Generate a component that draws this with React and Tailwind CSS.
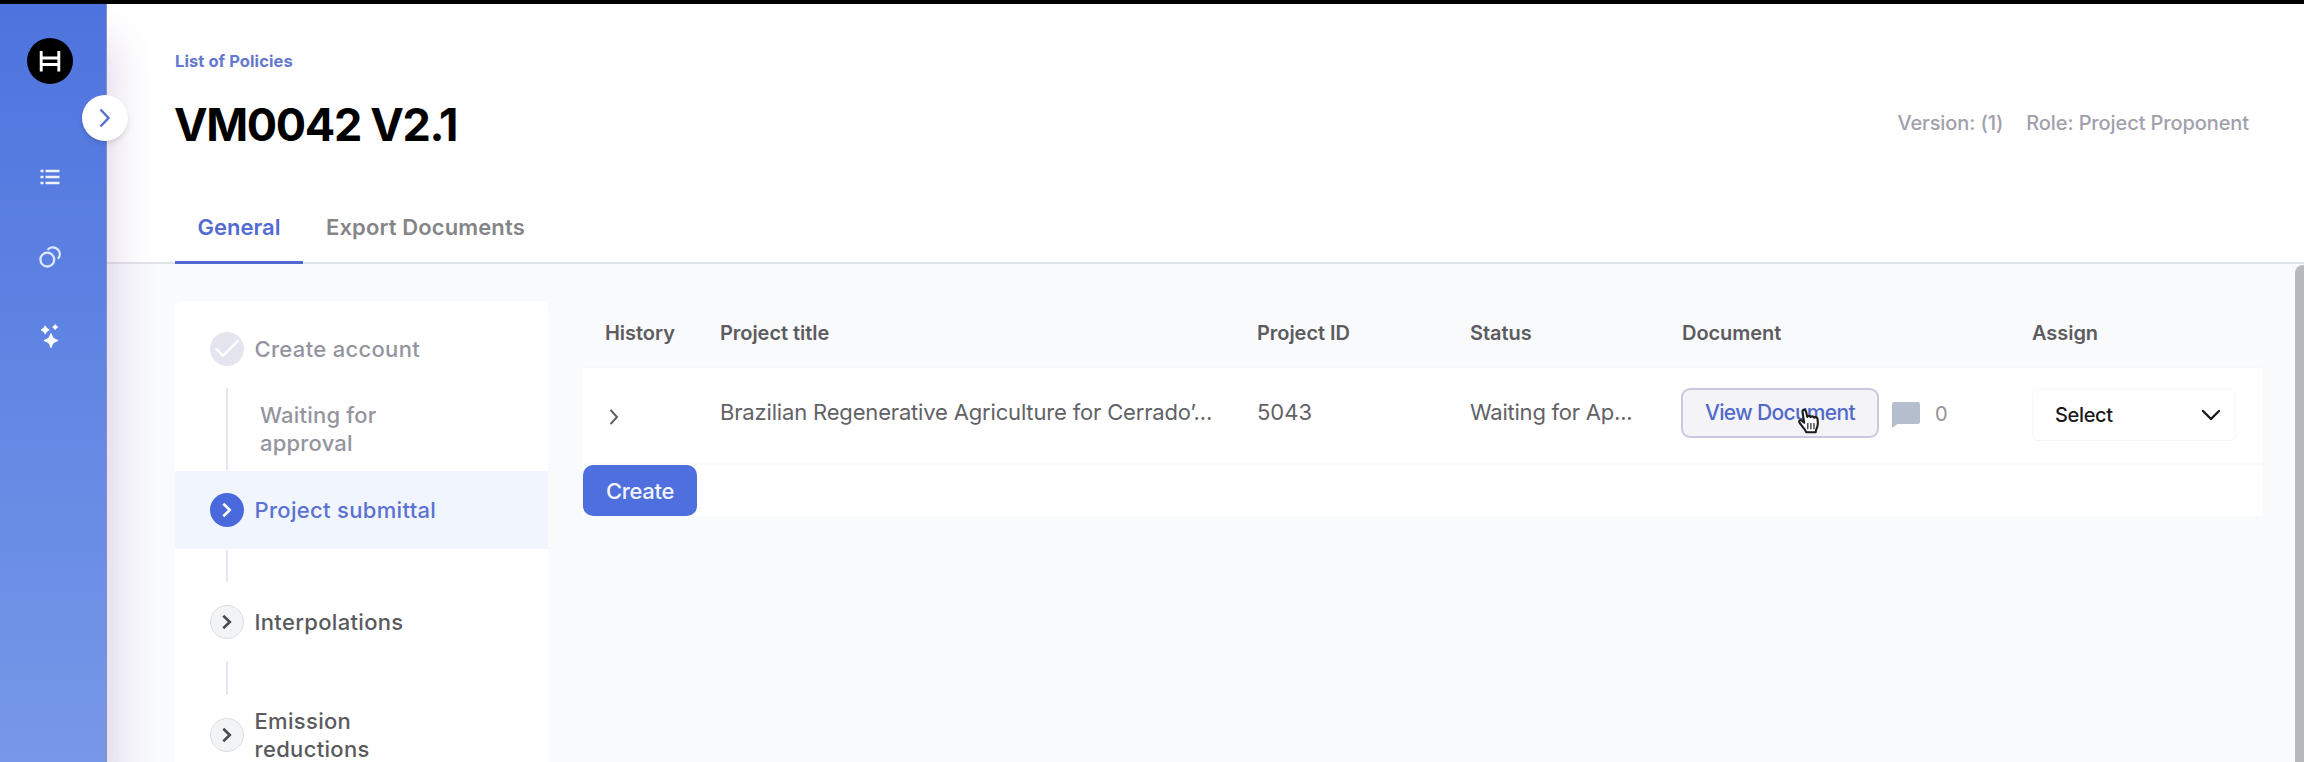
import React from 'react';
import { Check, ChevronDown } from 'lucide-react';
import { clsx } from 'clsx';

const steps = [
  { label: 'Create account', state: 'done' },
  { label: 'Project submittal', state: 'active' },
  { label: 'Interpolations', state: 'todo' },
  { label: 'Emission reductions', state: 'todo' },
];

const Logo = () => (
  <svg viewBox="0 0 46 46" className="w-[46px] h-[46px]">
    <circle cx="23" cy="23" r="23" fill="#000" />
    <path d="M14.2 13v20.5M31.8 13v20.5M14.2 20h17.6M14.2 26.500h17.600" fill="none" stroke="#fff" strokeWidth="2.900" />
  </svg>
);

const ListIcon = () => (
  <svg viewBox="0 0 20 16" className="w-5 h-4">
    <path d="M.5 2h3M.5 8h3M.5 14h3M5.5 2h14M5.5 8h14M5.5 14h14" fill="none" stroke="#eef2fd" strokeWidth="2.5" />
  </svg>
);

const TokensIcon = () => (
  <svg viewBox="0 0 22 22" className="w-[22px] h-[22px]" fill="none" stroke="#dfe7fb" strokeWidth="2.3">
    <circle cx="8.3" cy="13.6" r="6.9" />
    <path d="M8.600 3.800C10.500.900 15.500.300 18.500 3.200s2.900 6.800.4 9.600" />
  </svg>
);

const SparklesIcon = () => (
  <svg viewBox="0 0 18 24" className="w-[18px] h-6" fill="#fff" stroke="#fff" strokeWidth="1.7" strokeLinejoin="round">
    <path d="M10 10c1 4 2.100 5.300 6.300 6.500-4.200 1.200-5.300 2.500-6.300 6.500-1-4-2.100-5.300-6.300-6.500 4.200-1.200 5.300-2.500 6.300-6.500z" />
    <path d="M4.200 2.500c.6 2.200 1.200 2.800 3.300 3.400-2.100.6-2.700 1.200-3.300 3.400-.6-2.200-1.200-2.800-3.300-3.400 2.100-.6 2.700-1.200 3.300-3.400z" />
    <path d="M14.200 1.200c.4 1.200.7 1.500 1.900 1.900-1.200.4-1.500.7-1.900 1.900-.4-1.200-.7-1.500-1.900-1.900 1.200-.4 1.500-.7 1.900-1.900z" />
  </svg>
);

const HandCursor = () => (
  <svg viewBox="0 0 24 28" className="absolute left-[115px] top-[19px] w-6 h-7">
    <path
      d="M8.200 24.800c-.4-1.700-1.600-2.800-3.200-4.900C3.400 17.800 1.700 16 1.200 14.500c-.4-1.400 1.300-2.200 2.700-1.200l2.300 2L4.500 4.600c-.2-2.500 2.900-2.900 3.500-.5l1.300 5.500c.3-1.600 3-1.500 3.400.2.6-1.400 3.100-1.100 3.500.6.8-1.200 3-.7 3.300 1 .5 2.900.6 4.900-.1 7.600-.5 2-1.700 3.300-1.700 5.800z"
      transform="translate(1 .4)"
      fill="#fff"
      stroke="#1c1c1f"
      strokeWidth="2.1"
      strokeLinejoin="round"
    />
    <path d="M10.800 16v6.200M13.900 16v6.200M17 16v6.200" fill="none" stroke="#333" strokeWidth="1.300" />
  </svg>
);

const Sidebar = () => (
  <aside className="relative z-10 flex w-[107px] shrink-0 flex-col items-center border-r border-[#8a8fc0] bg-linear-to-b from-[#4e73de] to-[#7798e8] pr-[6px] pt-[34px] shadow-[4px_40px_40px_2px_rgba(130,80,170,0.24)]">
    <Logo />
    <button className="absolute left-[82px] top-[91px] flex h-[46px] w-[46px] items-center justify-center rounded-full bg-white shadow-md">
      <svg viewBox="0 0 12 20" className="h-5 w-3" fill="none" stroke="#5a72cf" strokeWidth="2.500">
        <path d="M1.500 1.500l8 8.500-8 8.500" />
      </svg>
    </button>
    <nav className="mt-[85px] flex flex-col items-center">
      <ListIcon />
      <div className="mt-[61px]"><TokensIcon /></div>
      <div className="mt-[56px]"><SparklesIcon /></div>
    </nav>
  </aside>
);

const StepBadge = ({ state }) => (
  <span
    className={clsx(
      'flex h-[34px] w-[34px] shrink-0 items-center justify-center rounded-full',
      state === 'done' && 'bg-[#e4e5ee] text-white',
      state === 'active' && 'bg-[#4a69dc] text-white',
      state === 'todo' && 'border border-[#dcdee2] bg-[#f3f4f5] text-[#4b4b4f]'
    )}
  >
    {state === 'done' ? (
      <Check className="h-8 w-8" strokeWidth={1.6} />
    ) : (
      <svg viewBox="0 0 10 16" className="h-4 w-[10px]" fill="none" stroke="currentColor" strokeWidth="2.6">
        <path d="M1.300 1.700l6.500 6.300-6.500 6.300" />
      </svg>
    )}
  </span>
);

const Step = ({ step, className }) => (
  <div className={clsx('flex items-center gap-[11px] pl-[34.5px]', className)}>
    <StepBadge state={step.state} />
    <span
      className={clsx(
        'w-[200px] text-[22px] font-medium leading-[28px] tracking-[0.32px]',
        step.state === 'done' && 'text-[#94949f]',
        step.state === 'active' && 'text-[#5b72d2]',
        step.state === 'todo' && 'text-[#5a5a5e]'
      )}
    >
      {step.label}
    </span>
  </div>
);

const StepsPanel = () => (
  <div className="flex h-[461px] w-[373px] shrink-0 flex-col overflow-hidden rounded-t-md bg-white">
    <Step step={steps[0]} className="mt-[18px] h-[60px] shrink-0" />
    <div className="ml-[51px] mt-[9px] flex h-[82px] shrink-0 border-l-2 border-[#e6e6f1] pl-[32px] pt-[13px]">
      <p className="w-[140px] text-[22px] font-medium leading-[28px] tracking-[0.2px] text-[#94949f]">Waiting for approval</p>
    </div>
    <Step step={steps[1]} className="mt-px h-[78px] shrink-0 bg-[#f1f5fd]" />
    <div className="ml-[51px] mt-px h-8 w-0.5 shrink-0 bg-[#e6e6f3]" />
    <Step step={steps[2]} className="mt-[12px] h-[56px] shrink-0" />
    <div className="ml-[51px] mt-[11px] h-[34px] w-0.5 shrink-0 bg-[#e6e6f3]" />
    <Step step={steps[3]} className="mt-3 h-[56px] w-[220px] shrink-0" />
  </div>
);

const columns = 'grid grid-cols-[115px_537px_213px_212px_350px_1fr] pl-[22px]';

const ProjectsTable = () => (
  <div className="w-[1680px] shrink-0">
    <div className={clsx(columns, 'h-[67px] items-center border-b-2 border-[#f7f8f9] bg-[#f9fafc] pb-[2px] text-[20px] font-semibold tracking-[-0.05px] text-[#5c5c60]')}>
      <span>History</span>
      <span>Project title</span>
      <span>Project ID</span>
      <span>Status</span>
      <span>Document</span>
      <span>Assign</span>
    </div>
    <div className={clsx(columns, 'h-[97px] items-center border-b-2 border-[#fafafa] bg-white text-[22px] tracking-[-0.17px] text-[#626266]')}>
      <svg viewBox="0 0 10 16" className="ml-[4px] mt-[2px] h-4 w-[10px]" fill="none" stroke="#5c5c60" strokeWidth="2">
        <path d="M1.500 .800l6.500 7.200-6.500 7.200" />
      </svg>
      <span className="-mt-[7px]">Brazilian Regenerative Agriculture for Cerrado’...</span>
      <span className="-mt-[7px] tracking-normal">5043</span>
      <span className="-mt-[7px] tracking-[-0.23px]">Waiting for Ap...</span>
      <div className="relative -mt-[5px] flex items-center">
        <button className="-ml-px h-[50px] w-[198px] rounded-[9px] border-2 border-[#c9c8e0] bg-[#f4f4f7] text-[21px] font-medium tracking-[-0.65px] text-[#5169c9]">
          View Document
        </button>
        <HandCursor />
        <svg viewBox="0 0 28 26" className="ml-[13px] mt-[3px] h-[26px] w-7" fill="#b4becd">
          <path d="M2.500 0h23A2.500 2.500 0 0 1 28 2.500v17a2.500 2.500 0 0 1-2.500 2.500H5.500L0 26V2.500A2.500 2.500 0 0 1 2.500 0z" />
        </svg>
        <span className="ml-[15px] mt-px text-[20px] text-[#929297]">0</span>
      </div>
      <div className="-mt-[2px] flex h-[52px] w-[204px] items-center justify-between rounded-md border border-[#f6f6f7] pl-[22px] pr-[8px] text-[20px] font-medium tracking-[-0.35px] text-[#19191b]">
        Select
        <ChevronDown className="h-8 w-8" strokeWidth={1.800} />
      </div>
    </div>
    <div className="h-[51px] bg-white">
      <button className="h-[51px] w-[114px] rounded-[10px] bg-[#4e6fdd] pt-px text-[22px] font-medium tracking-[-0.3px] text-[#f3f5fd]">Create</button>
    </div>
  </div>
);

const App = () => {
  return (
    <div className="flex h-[762px] w-[2304px] flex-col overflow-hidden border-t-4 border-black bg-white font-['Inter',sans-serif]">
      <div className="flex min-h-0 flex-1">
        <Sidebar />
        <main className="flex min-w-0 flex-1 flex-col">
          <header className="flex h-[260px] shrink-0 flex-col border-b-2 border-[#e1e4e7] pl-[68px]">
            <a className="mt-[45px] text-[16.5px] font-bold leading-[24px] tracking-[0.08px] text-[#6478d0]">List of Policies</a>
            <div className="mt-[20px] flex h-[64px] items-center justify-between pr-[55px]">
              <h1 className="-ml-px text-[45px] font-bold leading-[64px] tracking-[-1.35px] text-black">VM0042 V2.1</h1>
              <div className="-mt-[4px] flex gap-[23px] text-[20px] font-medium tracking-[-0.1px] text-[#a1a0ac]">
                <span>Version: (1)</span>
                <span>Role: Project Proponent</span>
              </div>
            </div>
            <div className="mt-[38px] flex text-[22px] font-semibold">
              <span className="h-[69px] w-[128px] border-b-3 border-[#5068d2] text-center leading-[65px] text-[#536bd3]">General</span>
              <span className="pl-[23px] leading-[65px] tracking-[0.12px] text-[#858588]">Export Documents</span>
            </div>
          </header>
          <div className="flex min-h-0 flex-1 bg-[#f9fafc]">
            <div className="flex flex-1 gap-[35px] pl-[68px] pt-[37px]">
              <StepsPanel />
              <ProjectsTable />
            </div>
            <div className="mt-px w-[9px] shrink-0 rounded-tl-lg bg-[#b8b9bb]" />
          </div>
        </main>
      </div>
    </div>
  );
};

export default App;
